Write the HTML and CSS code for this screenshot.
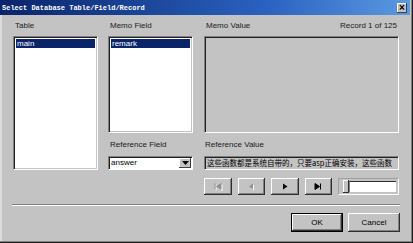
FILE: index.html
```html
<!DOCTYPE html>
<html>
<head>
<meta charset="utf-8">
<link rel="stylesheet" href="styles.css">
</head>
<body>
<div class="window">
  <div class="titlebar">
    <span class="title">Select Database Table/Field/Record</span>
    <span class="close">×</span>
  </div>
  <div class="body">
    <div class="grid">
      <div class="label c1 r1">Table</div>
      <div class="label c2 r1">Memo Field</div>
      <div class="label c3 r1 split"><span>Memo Value</span><span>Record 1 of 125</span></div>
      <div class="listbox table-list">
        <div class="item sel">main</div>
      </div>
      <div class="listbox memo-list">
        <div class="item sel">remark</div>
      </div>
      <div class="memo-value sunken"></div>
      <div class="label c2 r3">Reference Field</div>
      <div class="label c3 r3">Reference Value</div>
      <div class="combo c2 r4">
        <span class="combo-text">answer</span>
        <span class="drop"><svg width="7" height="4" viewBox="0 0 7 4"><path d="M0 0H7L3.5 4Z" fill="#000"/></svg></span>
      </div>
      <div class="ref-value sunken c3 r4">这些函数都是系统自带的，只要asp正确安装，这些函数</div>
      <div class="nav c3 r5">
        <button class="btn nbtn dis"><svg width="8" height="7" viewBox="0 0 8 7"><path d="M1 0.5V6.5M7 0.5L2.5 3.5L7 6.5Z" stroke="#909090" fill="#909090" stroke-width="1"/></svg></button>
        <button class="btn nbtn dis"><svg width="8" height="7" viewBox="0 0 8 7"><path d="M6 0.5L2 3.5L6 6.5Z" fill="#909090"/></svg></button>
        <button class="btn nbtn"><svg width="8" height="7" viewBox="0 0 8 7"><path d="M2 0.5L6.5 3.5L2 6.5Z" fill="#000"/></svg></button>
        <button class="btn nbtn"><svg width="8" height="7" viewBox="0 0 8 7"><path d="M1 0.5L5.5 3.5L1 6.5Z M6.5 0.5V6.5" stroke="#000" fill="#000" stroke-width="1"/></svg></button>
        <div class="slider">
          <span class="thumb"></span>
          <span class="track"></span>
        </div>
      </div>
    </div>
    <div class="sep"></div>
    <div class="footer">
      <button class="btn dbtn def">OK</button>
      <button class="btn dbtn">Cancel</button>
    </div>
  </div>
</div>
</body>
</html>
```
FILE: styles.css
```css
* { box-sizing: border-box; }
html, body { margin: 0; padding: 0; }
body {
  width: 413px;
  height: 243px;
  overflow: hidden;
  background: #c3c3c3;
  font-family: "Liberation Sans", Arial, sans-serif;
  font-size: 8px;
  color: #000;
}
.window {
  width: 413px;
  height: 243px;
  background: #c3c3c3;
  border-right: 1px solid #202020;
  border-bottom: 1px solid #202020;
  box-shadow: inset -1px -1px 0 #808080, inset 2px 0 0 #dcdcdc;
  display: flex;
  flex-direction: column;
}
.titlebar {
  height: 15px;
  margin-right: 2px;
  background: linear-gradient(to right, #0a246a 0%, #2a62c0 65%, #5a9ae0 100%);
  display: flex;
  align-items: center;
  justify-content: space-between;
  padding: 0 2px 0 2px;
}
.title {
  font-family: "Liberation Mono", "Courier New", monospace;
  font-weight: bold;
  font-size: 7px;
  color: #fff;
  white-space: nowrap;
}
.close {
  width: 10px;
  height: 10px;
  background: #c3c3c3;
  box-shadow: inset -1px -1px 0 #404040, inset 1px 1px 0 #fff;
  font-size: 10px;
  line-height: 9px;
  font-weight: bold;
  text-align: center;
  color: #000;
  margin-right: 1px;
}
.body {
  padding: 5px 0 0 13px;
  display: flex;
  flex-direction: column;
}
.grid {
  display: grid;
  grid-template-columns: 85px 85px 196px;
  column-gap: 10px;
  grid-template-rows: 16px 97px 23px 14px 25px;
}
.grid > :nth-child(3) { margin-left: 1px; }
.c1 { grid-column: 1; }
.c2 { grid-column: 2; }
.c3 { grid-column: 3; }
.r1 { grid-row: 1; }
.r3 { grid-row: 3; }
.r4 { grid-row: 4; }
.r5 { grid-row: 5; }
.label {
  padding-left: 2px;
  line-height: 10px;
  padding-top: 1px;
  white-space: nowrap;
  color: #202020;
}
.label.r3 { padding-top: 7px; }
.split { display: flex; justify-content: space-between; padding-right: 2px; }
.listbox {
  background: #fff;
  border: 1px solid;
  border-color: #808080 #fff #fff #808080;
  box-shadow: inset 1px 1px 0 #202020, inset -1px -1px 0 #c3c3c3;
  padding: 2px;
}
.table-list { grid-column: 1; grid-row: 2 / 5; }
.memo-list { grid-column: 2; grid-row: 2; }
.item {
  height: 9px;
  line-height: 9px;
  padding-left: 1px;
}
.item.sel { background: #0a246a; color: #fff; }
.sunken {
  border: 1px solid;
  border-color: #808080 #fff #fff #808080;
  box-shadow: inset 1px 1px 0 #202020, inset -1px -1px 0 #c3c3c3;
  background: #c3c3c3;
}
.memo-value { grid-column: 3; grid-row: 2; margin-left: 1px; }
.ref-value {
  margin-left: 1px;
  font-family: "Noto Sans CJK SC", sans-serif;
  font-size: 7.5px;
  line-height: 12px;
  padding-left: 2px;
  white-space: nowrap;
  overflow: hidden;
}
.combo {
  background: #fff;
  border: 1px solid;
  border-color: #808080 #fff #fff #808080;
  box-shadow: inset 1px 1px 0 #202020;
  display: flex;
  align-items: center;
  justify-content: space-between;
  padding: 1px 1px 1px 2px;
}
.combo-text { line-height: 10px; }
.drop {
  width: 12px;
  height: 10px;
  background: #c3c3c3;
  box-shadow: inset -1px -1px 0 #404040, inset 1px 1px 0 #fff;
  display: flex;
  align-items: center;
  justify-content: center;
}
.nav {
  display: flex;
  align-items: flex-end;
  gap: 6px;
  margin-left: 1px;
}
.btn {
  margin: 0;
  padding: 0;
  font-family: inherit;
  font-size: 8px;
  background: #c3c3c3;
  border: none;
  box-shadow: inset -1px -1px 0 #303030, inset 1px 1px 0 #fff, inset -2px -2px 0 #808080;
  display: flex;
  align-items: center;
  justify-content: center;
  color: #000;
}
.nbtn { width: 28px; height: 17px; }
.nbtn.dis svg { filter: drop-shadow(1px 1px 0 #fff); }
.slider {
  width: 62px;
  height: 17px;
  border: 1px solid;
  border-color: #a0a0a0 #fff #fff #a0a0a0;
  display: flex;
  align-items: center;
  padding-left: 4px;
}
.thumb {
  width: 6px;
  height: 13px;
  background: #c3c3c3;
  box-shadow: inset -1px -1px 0 #303030, inset 1px 1px 0 #fff;
}
.track {
  width: 47px;
  height: 11px;
  background: #fff;
  border-top: 1px solid #303030;
  border-left: 1px solid #808080;
}
.sep {
  margin-top: 9px;
  width: 388px;
  margin-left: -1px;
  height: 2px;
  border-top: 1px solid #808080;
  border-bottom: 1px solid #fff;
}
.footer {
  display: flex;
  justify-content: flex-end;
  gap: 5px;
  width: 387px;
  margin-top: 7px;
}
.dbtn { width: 52px; height: 19px; }
.dbtn.def {
  border: 1px solid #000;
  box-shadow: inset -1px -1px 0 #303030, inset 1px 1px 0 #fff, inset -2px -2px 0 #808080;
}
```
